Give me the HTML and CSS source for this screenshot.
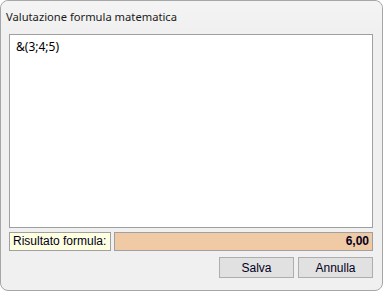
FILE: index.html
```html
<!DOCTYPE html>
<html lang="it">
<head>
  <meta charset="UTF-8">
  <title>Valutazione formula matematica</title>
  <link rel="stylesheet" href="styles.css">
</head>
<body>
  <div class="window">
    <div class="title">Valutazione formula matematica</div>
    <div class="content">
      <div class="formula">&amp;(3;4;5)</div>
      <div class="result-row">
        <div class="result-label">Risultato formula:</div>
        <div class="result-value">6,00</div>
      </div>
      <div class="buttons">
        <button class="btn">Salva</button>
        <button class="btn">Annulla</button>
      </div>
    </div>
  </div>
</body>
</html>
```

FILE: styles.css
```css
html, body {
  margin: 0;
  padding: 0;
  background: #ffffff;
}
.window {
  box-sizing: border-box;
  width: 383px;
  height: 291px;
  background: #f0f0f0;
  border: 1px solid #a6a6a6;
  border-radius: 8px;
  font-family: "Noto Sans", sans-serif;
  display: flex;
  flex-direction: column;
}
.title {
  height: 33px;
  padding-left: 5px;
  font-size: 11.2px;
  line-height: 31px;
  color: #1a1a1a;
  background: linear-gradient(#f4f4f4, #f0f0f0);
  border-radius: 8px 8px 0 0;
}
.content {
  padding: 0 9px 0 8px;
  display: flex;
  flex-direction: column;
}
.formula {
  box-sizing: border-box;
  height: 194px;
  background: #ffffff;
  border: 1px solid #a0a0a0;
  padding: 3px 6px;
  font-size: 12px;
  color: #000;
}
.result-row {
  display: flex;
  gap: 3px;
  margin-top: 4px;
  height: 19px;
}
.result-label, .result-value {
  box-sizing: border-box;
  border: 1px solid #a0a0a0;
  font-family: "Liberation Sans", Arial, sans-serif;
  font-size: 12px;
  line-height: 17px;
}
.result-label {
  width: 102px;
  background: #ffffe1;
  padding-left: 3px;
  color: #000020;
}
.result-value {
  flex: 1;
  background: #f0c9a5;
  text-align: right;
  font-weight: bold;
  padding-right: 3px;
  color: #000020;
}
.buttons {
  display: flex;
  justify-content: flex-end;
  gap: 4px;
  margin-top: 6px;
}
.btn {
  box-sizing: border-box;
  width: 75px;
  height: 21px;
  margin: 0;
  padding: 0;
  background: #e1e1e1;
  border: 1px solid #adadad;
  font-family: "Liberation Sans", Arial, sans-serif;
  font-size: 12px;
  color: #000020;
}
```
